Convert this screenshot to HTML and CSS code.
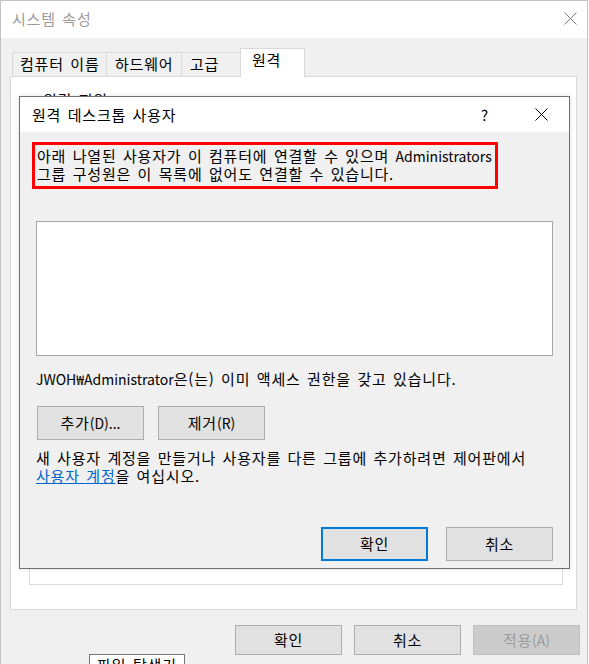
FILE: index.html
```html
<!DOCTYPE html>
<html lang="ko">
<head>
<meta charset="utf-8">
<title>시스템 속성</title>
<link rel="stylesheet" href="styles.css">
</head>
<body>
<div class="win">
  <div class="win-title">
    <span class="win-title-text">시스템 속성</span>
    <svg class="win-close" width="13" height="13" viewBox="0 0 13 13"><path d="M0.5 0.5 L12.5 12.5 M12.5 0.5 L0.5 12.5" stroke="#7a7a7a" stroke-width="1" fill="none"/></svg>
  </div>
  <div class="tabs">
    <div class="tab tab-1">컴퓨터 이름</div>
    <div class="tab tab-2">하드웨어</div>
    <div class="tab tab-3">고급</div>
    <div class="tab tab-sel">원격</div>
  </div>
  <div class="page">
    <fieldset class="group">
      <legend class="group-legend">원격 지원</legend>
    </fieldset>
  </div>
  <div class="actions">
    <button class="btn">확인</button>
    <button class="btn">취소</button>
    <button class="btn btn-disabled">적용<span class="en">(A)</span></button>
  </div>
</div>

<div class="dlg">
  <div class="dlg-title">
    <span class="dlg-title-text">원격 데스크톱 사용자</span>
    <span class="dlg-help">?</span>
    <span class="dlg-close"><svg width="13" height="13" viewBox="0 0 13 13"><path d="M0.5 0.5 L12.5 12.5 M12.5 0.5 L0.5 12.5" stroke="#000" stroke-width="1" fill="none"/></svg></span>
  </div>
  <div class="dlg-body">
    <div class="notice">아래 나열된 사용자가 이 컴퓨터에 연결할 수 있으며 <span class="en">Administrators</span><br>그룹 구성원은 이 목록에 없어도 연결할 수 있습니다.</div>
    <div class="listbox"></div>
    <div class="info"><span class="en">JWOH₩Administrator</span>은(는) 이미 액세스 권한을 갖고 있습니다.</div>
    <div class="btnrow">
      <button class="btn btn-lg">추가<span class="en">(D)...</span></button>
      <button class="btn btn-lg">제거<span class="en">(R)</span></button>
    </div>
    <div class="help">새 사용자 계정을 만들거나 사용자를 다른 그룹에 추가하려면 제어판에서<br><a class="link" href="#">사용자 계정</a>을 여십시오.</div>
    <div class="dlg-actions">
      <button class="btn btn-lg btn-focus">확인</button>
      <button class="btn btn-lg">취소</button>
    </div>
  </div>
</div>

<div class="tip">파일 탐색기</div>
</body>
</html>
```

FILE: styles.css
```css
html, body {
  margin: 0;
  padding: 0;
}
body {
  width: 589px;
  height: 664px;
  overflow: hidden;
  position: relative;
  background: #ffffff;
  font-family: "Noto Sans CJK KR", "Noto Sans", sans-serif;
  font-size: 15px;
  letter-spacing: 0.8px;
  word-spacing: 1.5px;
  color: #000;
}
.en {
  font-size: 14px;
  letter-spacing: 0;
}

.win {
  width: 586px;
  height: 700px;
  border: 1px solid #c2c2c2;
  border-bottom: none;
  background: #f0f0f0;
}

.win-title {
  height: 37px;
  background: #fff;
  display: flex;
  align-items: center;
  justify-content: space-between;
  padding: 0 10px 2px 11px;
  box-sizing: border-box;
}
.win-title-text {
  color: #9b9b9b;
  line-height: 18px;
}
.win-close {
  display: block;
}

.tabs {
  display: flex;
  align-items: flex-end;
  height: 28px;
  margin-top: 10px;
  padding-left: 11px;
  position: relative;
  z-index: 1;
}
.tab {
  height: 24px;
  box-sizing: border-box;
  border: 1px solid #d9d9d9;
  border-bottom: none;
  margin-right: -1px;
  line-height: 22px;
  background: #f0f0f0;
  white-space: nowrap;
}
.tab-1 { width: 95px; padding-left: 7px; }
.tab-2 { width: 76px; padding-left: 8px; }
.tab-3 { width: 60px; padding-left: 8px; }
.tab-sel {
  width: 65px;
  height: 29px;
  margin-bottom: -1px;
  padding-left: 11px;
  background: #fff;
}

.page {
  margin-left: 9px;
  width: 567px;
  height: 534px;
  box-sizing: border-box;
  border: 1px solid #d9d9d9;
  background: #fff;
  padding: 14px 0 0 18px;
}
.group {
  margin: 0;
  width: 534px;
  height: 494px;
  box-sizing: border-box;
  border: 1px solid #dcdcdc;
  padding: 0 0 0 10px;
}
.group-legend {
  padding: 0 3px;
  line-height: 18px;
}

.actions {
  display: flex;
  justify-content: flex-end;
  gap: 12px;
  margin-top: 15px;
  padding-right: 7px;
}

.btn {
  width: 107px;
  height: 30px;
  box-sizing: border-box;
  border: 1px solid #adadad;
  background: #e1e1e1;
  font-family: inherit;
  font-size: 15px;
  letter-spacing: 0.8px;
  color: #000;
  padding: 0;
  margin: 0;
  line-height: 18px;
}
.btn-disabled {
  background: #cccccc;
  border-color: #bfbfbf;
  color: #9a9a9a;
}
.btn-lg {
  height: 34px;
}
.btn-focus {
  border: 2px solid #0078d7;
}

.dlg {
  position: absolute;
  left: 19px;
  top: 96px;
  width: 551px;
  height: 473px;
  box-sizing: border-box;
  border: 1px solid #6f6f6f;
  background: #f0f0f0;
  box-shadow: 0 0 5px rgba(0, 0, 0, 0.12);
  display: flex;
  flex-direction: column;
}
.dlg-title {
  height: 35px;
  background: #fff;
  display: flex;
  align-items: center;
  flex-shrink: 0;
}
.dlg-title-text {
  flex: 1;
  padding-left: 12px;
  line-height: 18px;
}
.dlg-help {
  width: 46px;
  text-align: center;
  margin-right: 10px;
  line-height: 18px;
}
.dlg-close {
  width: 46px;
  height: 35px;
  margin-right: 5px;
  display: flex;
  align-items: center;
  justify-content: center;
}
.dlg-close svg { display: block; }

.dlg-body {
  padding: 0 16px;
}
.notice {
  margin: 10px 0 0 -4px;
  width: 466px;
  box-sizing: border-box;
  border: 3px solid #ff0000;
  padding: 2px 2px 3px 2px;
  line-height: 18px;
  white-space: nowrap;
}
.listbox {
  margin-top: 32px;
  height: 135px;
  box-sizing: border-box;
  border: 1px solid #a2a6ab;
  background: #fff;
}
.info {
  margin-top: 14px;
  line-height: 18px;
  white-space: nowrap;
}
.btnrow {
  display: flex;
  gap: 14px;
  margin-top: 18px;
  padding-left: 1px;
}
.help {
  margin-top: 9px;
  line-height: 18px;
  white-space: nowrap;
}
.link {
  color: #0066cc;
  text-decoration: underline;
}
.dlg-actions {
  display: flex;
  justify-content: flex-end;
  gap: 18px;
  margin-top: 42px;
}

.tip {
  position: absolute;
  left: 89px;
  top: 654px;
  width: 96px;
  height: 30px;
  box-sizing: border-box;
  border: 1px solid #767676;
  background: #fff;
  text-align: center;
  line-height: 20px;
}
```
